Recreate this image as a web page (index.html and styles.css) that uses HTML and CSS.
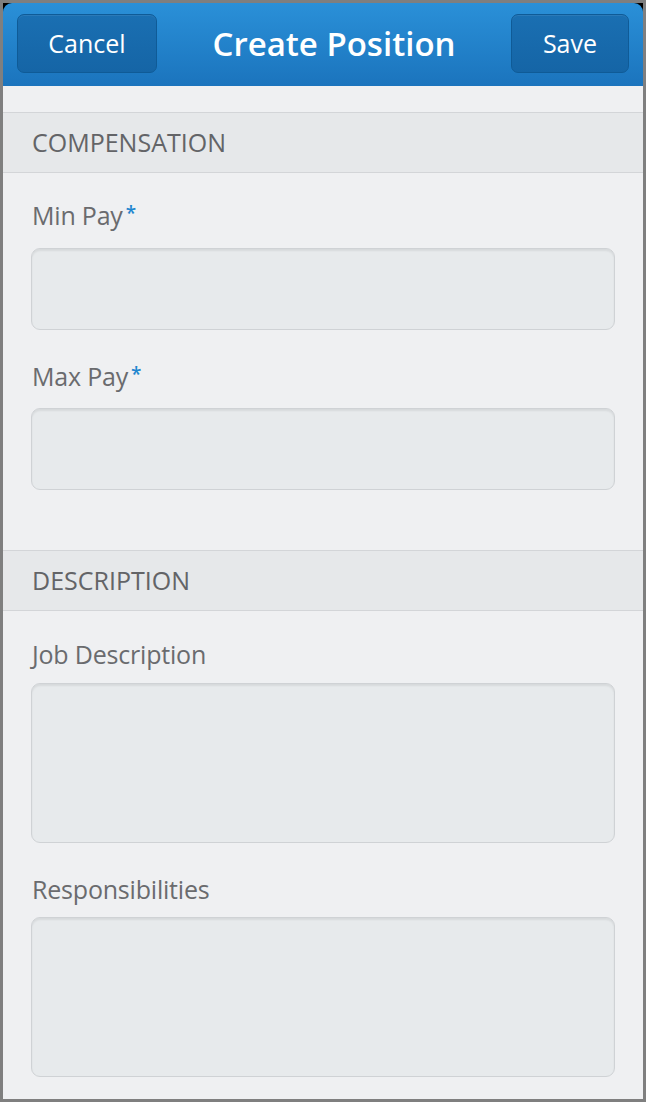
FILE: index.html
```html
<!DOCTYPE HTML>
<html>
	<head>
		<meta http-equiv="Content-Type" content="text/html; charset=utf-8">
		<title>Create Position</title>
		<link rel="stylesheet" href="styles.css">
	</head>
	<body>
		<div id="screen">
			<div id="top_bar">
				<div class="bar_btn" id="cancel">Cancel</div>
				<div id="title">Create Position</div>
				<div class="bar_btn" id="save">Save</div>
			</div>
			<div id="form_area">
				<div class="section_head">COMPENSATION</div>
				<div class="field">
					<div class="label">Min Pay<span class="req">*</span></div>
					<div class="input"></div>
				</div>
				<div class="field">
					<div class="label">Max Pay<span class="req">*</span></div>
					<div class="input"></div>
				</div>
				<div class="section_head gap_top">DESCRIPTION</div>
				<div class="field tight">
					<div class="label">Job Description</div>
					<div class="input area"></div>
				</div>
				<div class="field tight">
					<div class="label">Responsibilities</div>
					<div class="input area"></div>
				</div>
			</div>
		</div>
	</body>
</html>
```
FILE: styles.css
```css
html,body{margin:0;padding:0;}
body{background:#7f7f7f;font-family:"Open Sans","Noto Sans",sans-serif;}
#screen{margin:3px;height:1096px;background:#000;display:flex;flex-direction:column;}
#top_bar{height:83px;box-sizing:border-box;padding:11px 14px 0;border-radius:9px 9px 0 0;background:linear-gradient(#2a90d8,#1b74bd);display:flex;align-items:flex-start;justify-content:space-between;}
.bar_btn{height:59px;box-sizing:border-box;border:1px solid #0f5b97;border-radius:7px;background:linear-gradient(#1a6fb2,#1565a6);box-shadow:inset 0 1px 0 rgba(255,255,255,0.08);color:#fff;font-size:25px;line-height:59px;display:flex;align-items:center;justify-content:center;}
#cancel{width:140px;}
#save{width:118px;}
#title{color:#fff;font-size:33px;font-weight:600;line-height:59px;}
#form_area{flex:1;background:#eff0f2;padding-top:26px;}
.section_head{height:59px;border-top:1px solid #d3d5d8;border-bottom:1px solid #d3d5d8;background:#e6e8ea;color:#636467;font-size:25px;line-height:59px;padding-left:29px;}
.gap_top{margin-top:60px;}
.field{padding:0 28px;}
.label{color:#6a6b6e;font-size:25px;line-height:26px;padding:29px 0 20px 1px;letter-spacing:-0.2px;}
.field + .field .label{padding-top:33px;padding-bottom:19px;}
.tight .label{padding-top:30px;padding-bottom:16px;}
.field.tight + .field.tight .label{padding-top:33px;padding-bottom:15px;}
.req{color:#1f86cf;font-size:19px;font-weight:600;vertical-align:top;margin-left:3px;line-height:22px;}
.input{height:82px;box-sizing:border-box;border:1px solid #cfd2d5;border-radius:9px;background:#e7eaec;box-shadow:inset 0 2px 2px rgba(0,0,0,0.07);}
.area{height:160px;}
```
